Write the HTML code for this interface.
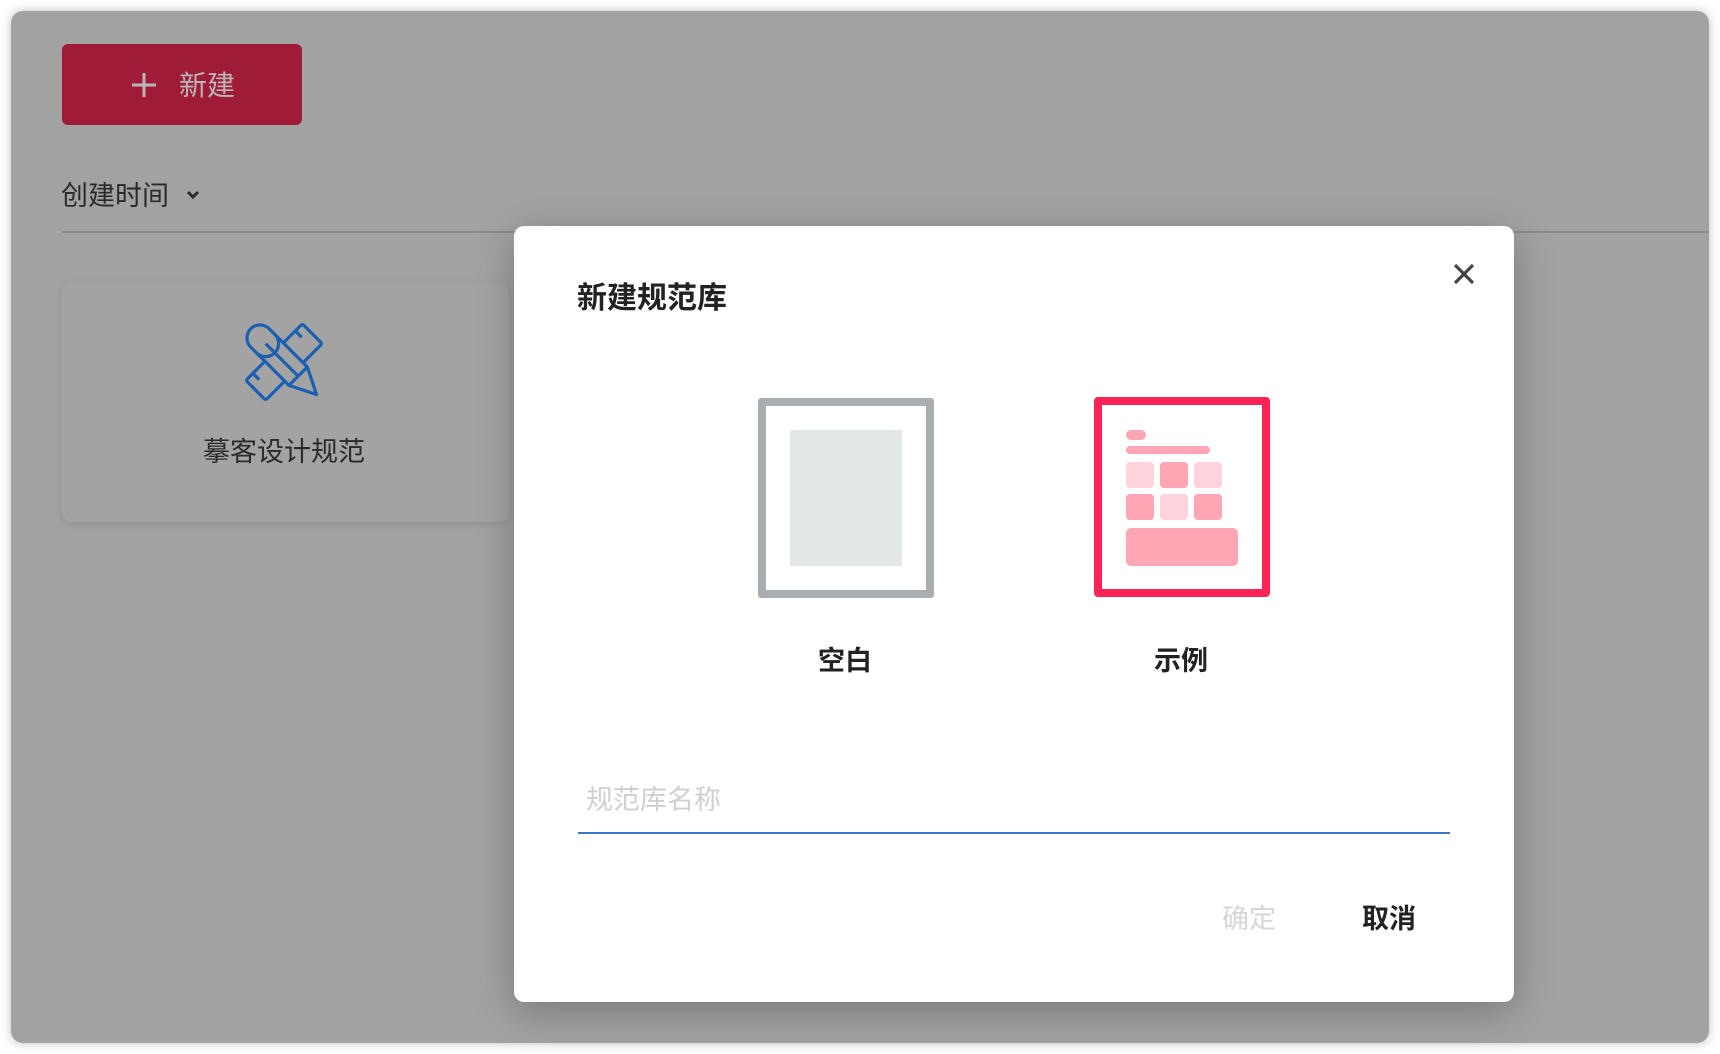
<!DOCTYPE html>
<html><head><meta charset="utf-8">
<style>
*{margin:0;padding:0;box-sizing:border-box}
body{width:1720px;height:1054px;background:#fff;position:relative;overflow:hidden;font-family:"Liberation Sans","Noto Sans CJK SC",sans-serif}
.panel{position:absolute;left:11px;top:11px;width:1698px;height:1032px;background:#a2a2a2;border-radius:12px;box-shadow:0 0 10px rgba(0,0,0,.25)}
.abs{position:absolute}
.btn{left:62px;top:44px;width:240px;height:81px;background:#a01b37;border-radius:6px;color:#b8b8b8;font-size:28px}
.card{left:62px;top:282px;width:447px;height:240px;background:#a3a3a3;border-radius:10px;box-shadow:0 2px 8px rgba(0,0,0,.12)}
.modal{left:514px;top:226px;width:1000px;height:776px;background:#fff;border-radius:10px;box-shadow:0 10px 40px rgba(0,0,0,.25)}
.t{white-space:nowrap;line-height:1}
</style></head><body>
<div class="panel"></div>
<div class="abs btn">
  <svg class="abs" style="left:68px;top:27px" width="28" height="28" viewBox="0 0 28 28"><path d="M14 2V26M2 14H26" stroke="#b8b8b8" stroke-width="3"/></svg>
  <div class="abs t" style="left:117px;top:28px">新建</div>
</div>
<div class="abs t" style="left:61px;top:183px;font-size:27px;color:#2a2a2a">创建时间</div>
<svg class="abs" style="left:186px;top:189px" width="14" height="12" viewBox="0 0 14 12"><path d="M2 3L7 8L12 3" stroke="#2a2a2a" stroke-width="3" fill="none"/></svg>
<div class="abs" style="left:62px;top:231px;width:1647px;height:2px;background:#8a8a8a"></div>
<div class="abs card"></div>
<svg class="abs" style="left:234px;top:312px" width="100" height="100" viewBox="-50 -50 100 100">
  <g fill="none" stroke="#1a5fb0" stroke-width="3.2" stroke-linejoin="round">
    <g transform="rotate(-45)">
      <rect x="-40" y="-14" width="80" height="28" rx="2" fill="#a3a3a3"/>
      <path d="M-30 -14V-5M30 -14V-5"/>
    </g>
    <g transform="rotate(45)">
      <path d="M-34 -13H20L46 0L20 13H-34A13 13 0 0 1 -34 -13Z" fill="#a3a3a3"/>
      <path d="M-26 -13A13 13 0 0 1 -26 13M20 -13V13M-26 0H20"/>
    </g>
  </g>
</svg>
<div class="abs t" style="left:184px;top:439px;width:200px;text-align:center;font-size:27px;color:#2a2a2a">摹客设计规范</div>

<div class="abs modal">
  <div class="abs t" style="left:63px;top:58px;font-size:30px;font-weight:bold;color:#222">新建规范库</div>
  <svg class="abs" style="left:939px;top:37px" width="22" height="22" viewBox="0 0 22 22"><path d="M2 2L20 20M20 2L2 20" stroke="#444" stroke-width="3.2"/></svg>
  <div class="abs" style="left:244px;top:172px;width:176px;height:200px;border:8px solid #a9acb0;border-radius:3px"></div>
  <div class="abs" style="left:276px;top:204px;width:112px;height:136px;background:#e4e7e8"></div>
  <div class="abs" style="left:580px;top:171px;width:176px;height:200px;border:8px solid #fb2456;border-radius:4px"></div>
  <div class="abs" style="left:612px;top:204px;width:20px;height:10px;background:#ffa6b5;border-radius:5px"></div>
  <div class="abs" style="left:612px;top:220px;width:84px;height:8px;background:#ffa6b5;border-radius:4px"></div>
  <div class="abs" style="left:612px;top:236px;width:28px;height:26px;background:#ffd3dc;border-radius:4px"></div>
  <div class="abs" style="left:646px;top:236px;width:28px;height:26px;background:#ffa6b5;border-radius:4px"></div>
  <div class="abs" style="left:680px;top:236px;width:28px;height:26px;background:#ffd3dc;border-radius:4px"></div>
  <div class="abs" style="left:612px;top:268px;width:28px;height:26px;background:#ffa6b5;border-radius:4px"></div>
  <div class="abs" style="left:646px;top:268px;width:28px;height:26px;background:#ffd3dc;border-radius:4px"></div>
  <div class="abs" style="left:680px;top:268px;width:28px;height:26px;background:#ffa6b5;border-radius:4px"></div>
  <div class="abs" style="left:612px;top:302px;width:112px;height:38px;background:#ffa6b5;border-radius:5px"></div>
  <div class="abs t" style="left:281px;top:422px;width:100px;text-align:center;font-size:27px;font-weight:bold;color:#222">空白</div>
  <div class="abs t" style="left:617px;top:422px;width:100px;text-align:center;font-size:27px;font-weight:bold;color:#222">示例</div>
  <div class="abs t" style="left:72px;top:561px;font-size:27px;color:#cfcfcf">规范库名称</div>
  <div class="abs" style="left:64px;top:606px;width:872px;height:2px;background:#3b78c9"></div>
  <div class="abs t" style="left:708px;top:680px;font-size:27px;color:#d6d6d6">确定</div>
  <div class="abs t" style="left:848px;top:680px;font-size:27px;font-weight:bold;color:#222">取消</div>
</div>
</body></html>
